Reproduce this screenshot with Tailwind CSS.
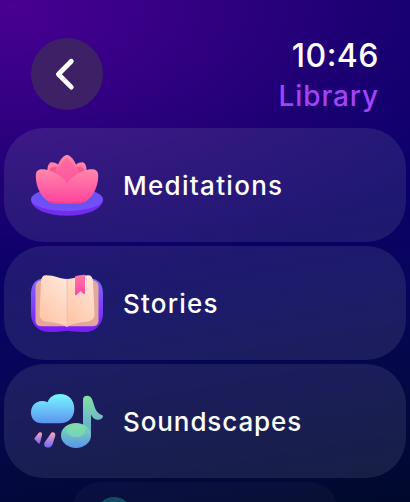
<!DOCTYPE html>
<html lang="en">
<head>
    <meta charset="UTF-8">
    <meta name="viewport" content="width=device-width, initial-scale=1.0">
    <title>Library</title>
    <script src="https://cdn.jsdelivr.net/npm/@tailwindcss/browser@4"></script>
</head>
<body class="bg-[#00082c]">
    <div class="h-[502px] w-[410px] overflow-hidden bg-[radial-gradient(ellipse_500px_270px_at_10px_10px,#480091_0%,#3b0088d0_35%,#2a007a80_70%,#1a007400_100%),linear-gradient(170deg,#120070_0%,#0b006a_42%,#07055c_62%,#040844_80%,#00092c_100%)] px-1 font-[Inter,'Liberation_Sans',sans-serif] font-medium text-white">
        <header class="flex h-32 justify-between pt-[38px] pr-[27px] pl-[27px]">
            <button class="flex size-[72px] items-center justify-center rounded-full bg-[#3d2065]">
                <svg class="size-[72px]" viewBox="0 0 72 72" fill="none">
                    <path d="M40.3 23.3 27.4 36.2 40.3 49.1" stroke="#fff" stroke-width="4.800" stroke-linecap="round" stroke-linejoin="round" />
                </svg>
            </button>
            <div class="text-right">
                <div class="mt-[-2px] text-[32px] leading-10 tracking-[0.5px]">10<span class="relative -top-px">:</span>46</div>
                <h1 class="-mt-px text-[28px] leading-[42px] tracking-[0.9px] text-[#a044f8]">Library</h1>
            </div>
        </header>

        <main class="flex flex-col gap-1">
            <!-- Meditations -->
            <a class="flex h-[114px] w-[402px] items-center gap-5 rounded-[40px] bg-[#9a9eb4]/15 px-[27px]">
                <svg class="size-[72px] shrink-0" viewBox="0 0 72 72">
                    <defs>
                        <linearGradient id="petal" x1="0" y1="0" x2="0" y2="1">
                            <stop offset="0" stop-color="#ff87ac" />
                            <stop offset="1" stop-color="#ff429d" />
                        </linearGradient>
                        <linearGradient id="petalTop" x1="0" y1="0" x2="0" y2="1">
                            <stop offset="0" stop-color="#ff8baa" />
                            <stop offset="1" stop-color="#fd4297" />
                        </linearGradient>
                        <radialGradient id="plate" cx=".5" cy=".45" r=".55">
                            <stop offset="0" stop-color="#5638c8" />
                            <stop offset=".55" stop-color="#6654ec" />
                            <stop offset="1" stop-color="#7a4cff" />
                        </radialGradient>
                    </defs>
                    <path d="M0 50.5C0 60 16 66.7 36 66.7S72 60 72 50.5Z" fill="#742bf0" />
                    <ellipse cx="36" cy="50.3" rx="36" ry="11.6" fill="url(#plate)" />
                    <path d="M17 26C15.500 20 17 13.300 20.500 13.300C24 13.300 27 15 28 17L26 27ZM55 26C56.500 20 55 13.300 51.500 13.300C48 13.300 45 15 44 17L46 27Z" fill="#ff7fa6" />
                    <path d="M18.500 25C18 20 20 16.500 26 18L26 27ZM53.500 25C54 20 52 16.500 46 18L46 27Z" fill="#f95792" />
                    <path d="M36 6C31.500 6 24.500 16.500 24.500 26L36 37 47.500 26C47.500 16.500 40.500 6 36 6Z" fill="url(#petalTop)" />
                    <path d="M36 9C32 11 26.500 19 26.500 27L36 36 45.500 27C45.500 19 40 11 36 9Z" fill="#fd5b9e" opacity=".6" />
                    <path d="M36 35C39 28 52 20.300 61 20.300C65.500 20.300 67.200 22.500 67.200 27C67.200 41 58 54.800 46 54.800H26C14 54.800 4.800 41 4.800 27C4.800 22.500 6.500 20.300 11 20.300C20 20.300 33 28 36 35Z" fill="url(#petal)" />
                    <path d="M18 51.500Q36 55.500 54 51.500Q50 54.800 44 55.100H28Q22 54.800 18 51.500" fill="#f33b88" />
                </svg>
                <span class="text-[26px] tracking-[1.3px]">Meditations</span>
            </a>

            <!-- Stories -->
            <a class="flex h-[114px] w-[402px] items-center gap-5 rounded-[40px] bg-[#9a9eb4]/15 px-[27px]">
                <svg class="size-[72px] shrink-0" viewBox="0 0 72 72">
                    <defs>
                        <linearGradient id="cover" x1="0" y1="0" x2="0" y2="1">
                            <stop offset="0" stop-color="#8168ff" />
                            <stop offset="1" stop-color="#791af5" />
                        </linearGradient>
                        <linearGradient id="page" x1=".8" y1="0" x2=".2" y2="1">
                            <stop offset="0" stop-color="#ffe5d7" />
                            <stop offset="1" stop-color="#ffc4a5" />
                        </linearGradient>
                        <linearGradient id="mark" x1="0" y1="0" x2="0" y2="1">
                            <stop offset="0" stop-color="#ff78a4" />
                            <stop offset="1" stop-color="#ff48a3" />
                        </linearGradient>
                    </defs>
                    <path d="M12 11.800H60C68 12 72 18 72 27V46C72 58 64 65 54 65Q44 65 36 63.800Q28 65 18 65C8 65 0 58 0 46V27C0 18 4 12 12 11.800Z" fill="url(#cover)" />
                    <path d="M9 13.500H63Q67.500 15 67.500 20V54Q67.500 59.300 61 59.300H11Q4.500 59.300 4.500 54V20Q4.500 15 9 13.500Z" fill="#e3a79b" />
                    <path d="M36 12.200C30 12.200 24 8.300 15 8.300Q10.500 8.300 10 14L8.500 47Q8.500 53.500 15 54.500C25 55.500 32 57 36 60Z" fill="url(#page)" />
                    <path d="M36 12.200C42 12.200 48 8.300 57 8.300Q61.500 8.300 62 14L63.500 47Q63.500 53.500 57 54.500C47 55.500 40 57 36 60Z" fill="url(#page)" />
                    <path d="M36 12.500V59.500" stroke="#e8b9a2" stroke-width=".7" />
                    <path d="M44 9.300Q49 7.600 54 7.700V26.500Q53.600 27.800 52.500 26.800L49.300 24 45.500 27.900Q44 28.800 44 27Z" fill="url(#mark)" />
                </svg>
                <span class="text-[26px] tracking-[1.2px]">Stories</span>
            </a>

            <!-- Soundscapes -->
            <a class="flex h-[114px] w-[402px] items-center gap-5 rounded-[40px] bg-[#9a9eb4]/15 px-[27px]">
                <svg class="size-[72px] shrink-0" viewBox="0 0 72 72">
                    <defs>
                        <linearGradient id="cloud" x1="0" y1="0" x2="0" y2="1">
                            <stop offset="0" stop-color="#78f7ff" />
                            <stop offset="1" stop-color="#5c94ee" />
                        </linearGradient>
                        <linearGradient id="note" gradientUnits="userSpaceOnUse" x1="0" y1="10" x2="0" y2="62">
                            <stop offset="0" stop-color="#82e3a0" />
                            <stop offset=".95" stop-color="#5b94ec" />
                        </linearGradient>
                        <linearGradient id="head" x1="0" y1="0" x2="0" y2="1">
                            <stop offset="0" stop-color="#80e2a2" />
                            <stop offset="1" stop-color="#5995ef" />
                        </linearGradient>
                        <linearGradient id="drop" x1="0" y1="0" x2="0" y2="1">
                            <stop offset="0" stop-color="#ffa5b2" />
                            <stop offset="1" stop-color="#6c66ff" />
                        </linearGradient>
                    </defs>
                    <path d="M11 38.300C4 38.300 0 33.500 0 27.500C0 21 4.500 16 11 16Q14 16 16.500 17.300C18.500 12 23 9 29 9C37.500 9 43.300 15 43.300 23.700C43.300 32.500 37.500 38.300 29 38.300Z" fill="url(#cloud)" />
                    <path d="M52 50V15Q52 10.800 56.300 10.800C60.500 10.800 61.500 15 63 20C64.800 26 67 28.500 71 30Q73 31.500 71 33.300C67 36.500 62 34.500 60 29.500V50Z" fill="url(#note)" />
                    <ellipse cx="45" cy="50.400" rx="15" ry="12.500" fill="url(#head)" />
                    <ellipse cx="45" cy="46" rx="9.200" ry="6.300" fill="#85e2ae" opacity=".55" />
                    <path d="M8 47.500Q11.500 46.500 11 50L9 58Q8.500 59.500 7 58L3.700 54.500Q3 53.700 4 52.500Z" fill="url(#drop)" />
                    <path d="M20.500 47.600Q22.500 46.600 23.800 48.200Q24.600 49.200 24.200 51L21.500 59.500Q20.300 62.600 17 62.600C13.500 62.600 12 59.500 14.300 56.500Z" fill="url(#drop)" />
                </svg>
                <span class="text-[26px] tracking-[0.9px]">Soundscapes</span>
            </a>

            <!-- next item, scrolling in -->
            <div class="mx-auto h-20 w-[266px] rounded-[28px] bg-[#9a9eb4]/5 pt-[15px] pl-[24px]">
                <div class="h-9 w-[36px] rounded-full bg-[#104c62]"></div>
            </div>
        </main>
    </div>
</body>
</html>
